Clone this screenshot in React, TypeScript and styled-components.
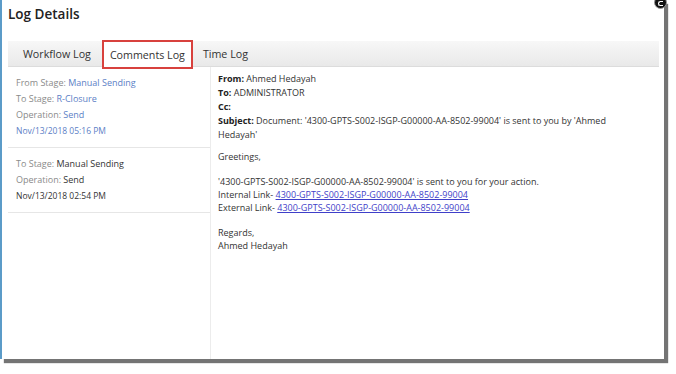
import styled, { createGlobalStyle } from 'styled-components';

const GlobalStyle = createGlobalStyle`
  html, body {
    margin: 0;
    padding: 0;
    background: #ffffff;
  }
  body {
    font-family: "Open Sans", "Liberation Sans", sans-serif;
    color: #333;
  }
`;

// Componentes estilizados
const Page = styled.div`
  width: 676px;
  height: 374px;
  position: relative;
  overflow: hidden;
  background: #fff;
`;

const Dialog = styled.div`
  width: 656px;
  height: 359px;
  border-left: 2px solid #5b9bc8;
  padding-left: 6px;
  background: #fff;
  box-shadow: 4px 4px 1px rgba(70, 70, 70, 0.75);
  display: flex;
  flex-direction: column;
`;

const CloseIcon = styled.div`
  position: absolute;
  top: -4px;
  left: 654px;
  width: 11px;
  height: 11px;
  border-radius: 50%;
  background: #111;
  border: 1px solid #999;
  &::after {
    content: '';
    position: absolute;
    left: 3px;
    top: 4px;
    width: 4px;
    height: 3px;
    border: 1px solid #fff;
    border-right: none;
    border-radius: 3px 0 0 3px;
  }
`;

const Title = styled.h2`
  margin: 0;
  padding: 5px 0 0 0;
  height: 41px;
  box-sizing: border-box;
  font-size: 13.5px;
  font-weight: 600;
  color: #222;
`;

const TabBar = styled.div`
  height: 25px;
  margin-right: 5px;
  display: flex;
  align-items: stretch;
  background: linear-gradient(#f7f7f7, #e9e9e9);
  border-bottom: 1px solid #dcdcdc;
`;

const Tab = styled.div<{ $active?: boolean; $pad: string }>`
  display: flex;
  align-items: center;
  padding: ${(p) => p.$pad};
  font-size: 10.7px;
  color: #333;
  white-space: nowrap;
  ${(p) =>
    p.$active &&
    `
    margin: -1px 0 -3px 0;
    background: #fff;
    border: 2px solid #d8413d;
  `}
`;

const Body = styled.div`
  flex: 1;
  display: flex;
  margin-right: 5px;
`;

const History = styled.div`
  width: 202px;
  border-right: 1px solid #ececec;
  flex-shrink: 0;
`;

const Entry = styled.div`
  padding: 8px 0 8px 8px;
  border-bottom: 1px solid #e6e6e6;
  font-size: 9px;
  line-height: 16px;
`;

const Label = styled.span`
  color: #8a8a8a;
`;

const Value = styled.span<{ $blue?: boolean }>`
  color: ${(p) => (p.$blue ? '#5c80c6' : '#333')};
`;

const Stamp = styled.div<{ $blue?: boolean }>`
  font-size: 8.5px;
  color: ${(p) => (p.$blue ? '#5c80c6' : '#333')};
`;

const Message = styled.div`
  flex: 1;
  padding: 5px 16px 0 7px;
  font-size: 9px;
  color: #333;
`;

const Header = styled.div`
  line-height: 14px;
`;

const Para = styled.div<{ $gap: number }>`
  line-height: 13px;
  margin-top: ${(p) => p.$gap}px;
`;

const Bold = styled.b`
  font-weight: 700;
  color: #222;
`;

const Link = styled.a`
  color: #3f3fc9;
  text-decoration: underline;
`;

const DOC = '4300-GPTS-S002-ISGP-G00000-AA-8502-99004';

export default function App() {
  return (
    <>
      <GlobalStyle />
      <Page>
        <Dialog>
          <Title>Log Details</Title>
          <TabBar>
            <Tab $pad="0 11px 0 15px">Workflow Log</Tab>
            <Tab $active $pad="0 6px">Comments Log</Tab>
            <Tab $pad="0 10px">Time Log</Tab>
          </TabBar>
          <Body>
            <History>
              <Entry>
                <div><Label>From Stage: </Label><Value $blue>Manual Sending</Value></div>
                <div><Label>To Stage: </Label><Value $blue>R-Closure</Value></div>
                <div><Label>Operation: </Label><Value $blue>Send</Value></div>
                <Stamp $blue>Nov/13/2018 05:16 PM</Stamp>
              </Entry>
              <Entry>
                <div><Label>To Stage: </Label><Value>Manual Sending</Value></div>
                <div><Label>Operation: </Label><Value>Send</Value></div>
                <Stamp>Nov/13/2018 02:54 PM</Stamp>
              </Entry>
            </History>
            <Message>
              <Header>
                <div><Bold>From:</Bold> Ahmed Hedayah</div>
                <div><Bold>To:</Bold> ADMINISTRATOR</div>
                <div><Bold>Cc:</Bold></div>
                <div>
                  <Bold>Subject:</Bold> Document: '{DOC}' is sent to you by 'Ahmed Hedayah'
                </div>
              </Header>
              <Para $gap={8}>Greetings,</Para>
              <Para $gap={12}>
                <div>'{DOC}' is sent to you for your action.</div>
                <div>Internal Link- <Link href="#">{DOC} </Link></div>
                <div>External Link- <Link href="#">{DOC} </Link></div>
              </Para>
              <Para $gap={12}>
                <div>Regards,</div>
                <div>Ahmed Hedayah</div>
              </Para>
            </Message>
          </Body>
        </Dialog>
        <CloseIcon />
      </Page>
    </>
  );
}
